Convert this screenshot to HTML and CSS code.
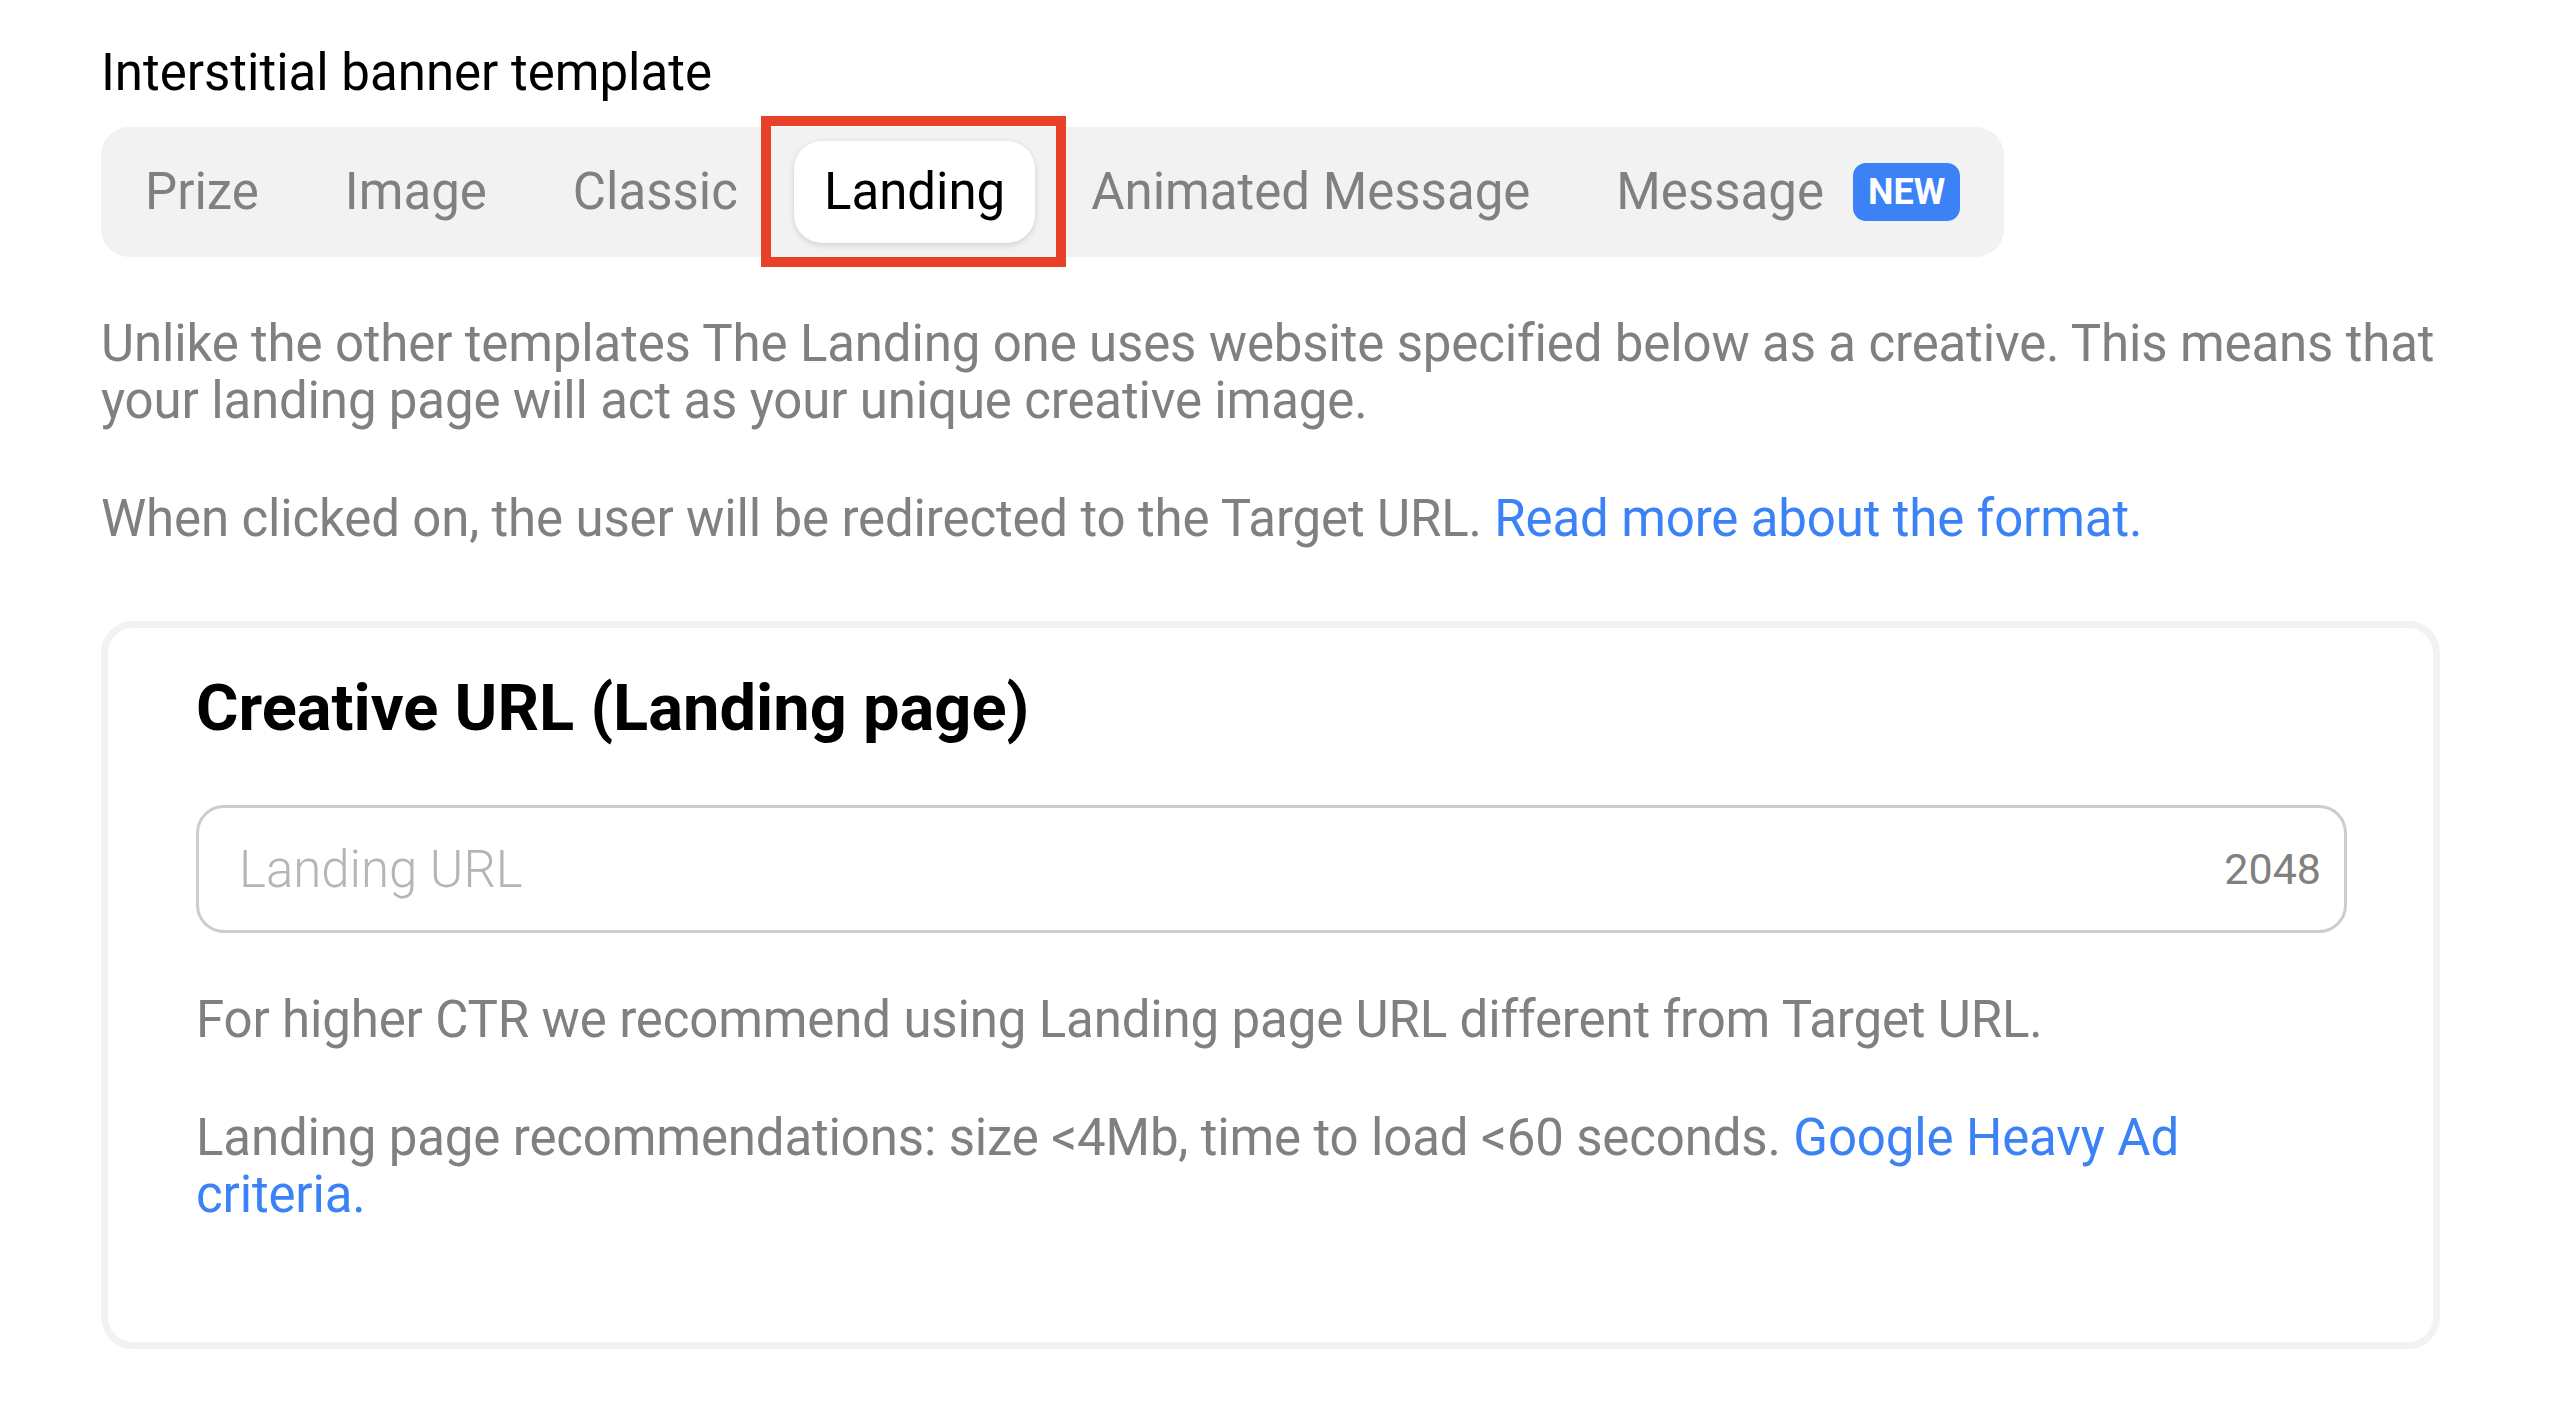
FILE: index.html
```html
<!DOCTYPE html>
<html lang="en">

<head>
    <meta charset="UTF-8">
    <meta name="viewport" content="width=device-width, initial-scale=1.0">
    <title>Interstitial banner template</title>

    <link rel="stylesheet" href="styles.css">
</head>

<body>
    <div class="page">
        <h4 class="section-title">Interstitial banner template</h4>

        <div class="tabs">
            <span class="tab">Prize</span>
            <span class="tab">Image</span>
            <span class="tab">Classic</span>
            <span class="tab tab-active">Landing<span class="highlight"></span></span>
            <span class="tab">Animated Message</span>
            <span class="tab">Message <span class="badge">NEW</span></span>
        </div>

        <div class="hints intro">
            <p>Unlike the other templates The Landing one uses website specified below as a creative. This means that your landing page will act as your unique creative image.</p>
            <p>When clicked on, the user will be redirected to the Target URL. <a href="#">Read more about the format.</a></p>
        </div>

        <div class="card">
            <h2 class="card-title">Creative URL (Landing page)</h2>

            <div class="field">
                <input type="text" placeholder="Landing URL">
                <span class="counter">2048</span>
            </div>

            <div class="hints card-hints">
                <p>For higher CTR we recommend using Landing page URL different from Target URL.</p>
                <p>Landing page recommendations: size &lt;4Mb, time to load &lt;60 seconds. <a href="#">Google Heavy Ad criteria.</a></p>
            </div>
        </div>
    </div>
</body>
</html>
```

FILE: styles.css
```css
body {
    font-family: Roboto, "Liberation Sans", sans-serif;
    margin: 0;
    padding: 0;
    background-color: #fff;
    color: #000;
}

.page {
    width: 2339px;
    padding: 44px 0 0 101px;
}

.section-title {
    margin: 0;
    font-size: 51px;
    font-weight: 400;
    line-height: 57px;
}

.tabs {
    display: flex;
    align-items: center;
    gap: 26px;
    width: max-content;
    margin-top: 26px;
    padding: 14px;
    background-color: #f2f2f2;
    border-radius: 28px;
}

.tab {
    display: flex;
    align-items: center;
    gap: 29px;
    padding: 22px 30px;
    font-size: 51px;
    line-height: 58px;
    color: #808080;
    border-radius: 28px;
    white-space: nowrap;
}

.tab-active {
    position: relative;
    background-color: #fff;
    color: #000;
    box-shadow: 0 2px 6px rgba(0, 0, 0, 0.14);
}

/* red annotation frame round the selected tab */
.highlight {
    position: absolute;
    top: -25px;
    right: -31px;
    bottom: -24px;
    left: -33px;
    border: 10px solid #e8412a;
    pointer-events: none;
}

.badge {
    display: inline-block;
    padding: 0 15px;
    height: 58px;
    line-height: 58px;
    font-size: 36px;
    font-weight: 700;
    color: #fff;
    background-color: #3b82f6;
    border-radius: 13px;
}

.hints p {
    margin: 0;
    font-size: 51px;
    line-height: 57px;
    letter-spacing: -0.15px;
    color: #808080;
}

.hints p + p {
    margin-top: 61px;
}

.hints a {
    color: #3b82f6;
    text-decoration: none;
}

.intro {
    margin-top: 58px;
}

.card {
    margin-top: 74px;
    padding: 42px 86px 119px 88px;
    border: 7px solid #f2f2f2;
    border-radius: 32px;
}

.card-title {
    margin: 0;
    font-size: 65px;
    font-weight: 700;
    line-height: 77px;
}

.field {
    display: flex;
    align-items: center;
    box-sizing: border-box;
    height: 128px;
    margin-top: 58px;
    padding: 0 23px 0 40px;
    border: 3px solid #cccccc;
    border-radius: 28px;
}

.field input {
    flex: 1;
    min-width: 0;
    padding: 0;
    border: none;
    outline: none;
    background: transparent;
    font-family: inherit;
    font-size: 51px;
    font-weight: 300;
    color: #000;
}

.field input::placeholder {
    color: #b5b5b5;
}

.counter {
    font-size: 43px;
    color: #808080;
}

.card-hints {
    margin-top: 58px;
}
```
